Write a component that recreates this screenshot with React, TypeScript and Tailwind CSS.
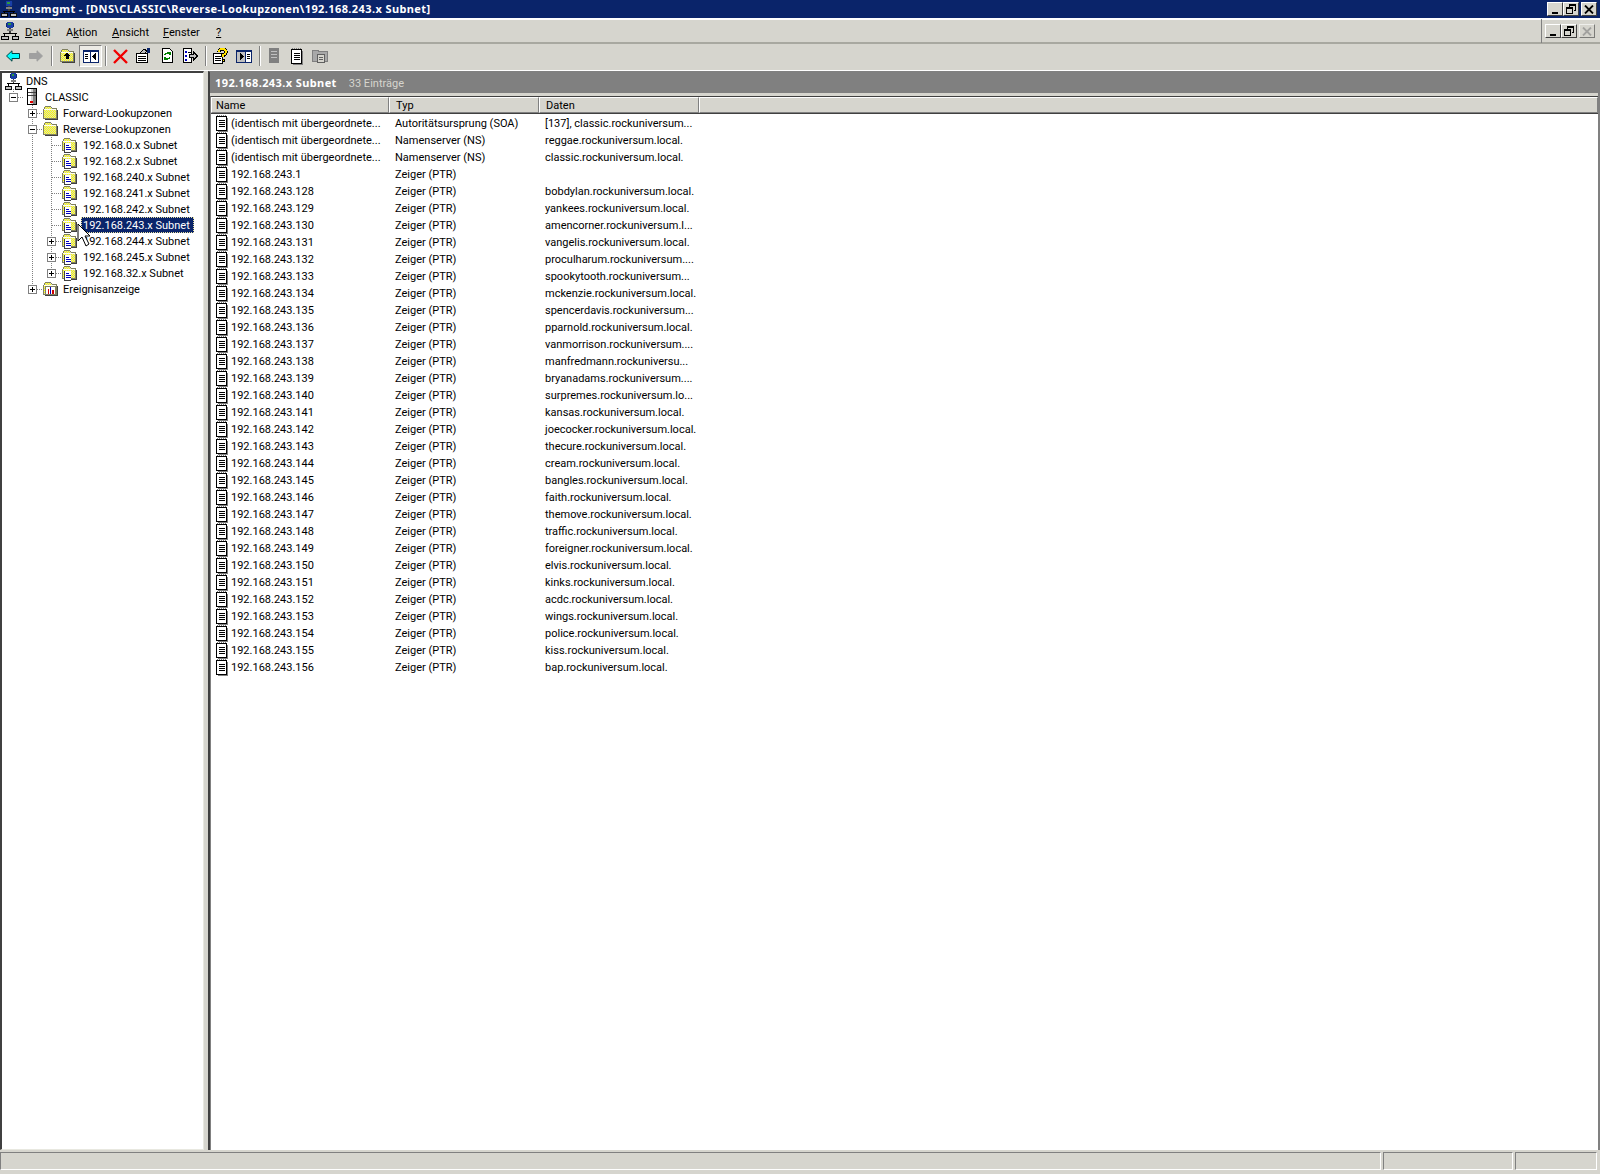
import type { ReactNode } from "react";

const domain = "rockuniversum.local.";

const records: [string, string, string][] = [
  ["(identisch mit übergeordnete...", "Autoritätsursprung (SOA)", "[137], classic.rockuniversum..."],
  ["(identisch mit übergeordnete...", "Namenserver (NS)", `reggae.${domain}`],
  ["(identisch mit übergeordnete...", "Namenserver (NS)", `classic.${domain}`],
  ["192.168.243.1", "Zeiger (PTR)", ""],
  ...[
    `bobdylan.${domain}`,
    `yankees.${domain}`,
    "amencorner.rockuniversum.l...",
    `vangelis.${domain}`,
    "proculharum.rockuniversum....",
    "spookytooth.rockuniversum...",
    `mckenzie.${domain}`,
    "spencerdavis.rockuniversum...",
    `pparnold.${domain}`,
    "vanmorrison.rockuniversum....",
    "manfredmann.rockuniversu...",
    "bryanadams.rockuniversum....",
    "surpremes.rockuniversum.lo...",
    `kansas.${domain}`,
    `joecocker.${domain}`,
    `thecure.${domain}`,
    `cream.${domain}`,
    `bangles.${domain}`,
    `faith.${domain}`,
    `themove.${domain}`,
    `traffic.${domain}`,
    `foreigner.${domain}`,
    `elvis.${domain}`,
    `kinks.${domain}`,
    `acdc.${domain}`,
    `wings.${domain}`,
    `police.${domain}`,
    `kiss.${domain}`,
    `bap.${domain}`,
  ].map((host, i): [string, string, string] => [`192.168.243.${128 + i}`, "Zeiger (PTR)", host]),
];

function Px({ w = 16, h = 16, children }: { w?: number; h?: number; children: ReactNode }) {
  return (
    <svg width={w} height={h} viewBox={`0 0 ${w} ${h}`} shapeRendering="crispEdges" className="shrink-0">
      {children}
    </svg>
  );
}

function Dither({ id, a = "#ffff00", b = "#d8d8c0" }: { id: string; a?: string; b?: string }) {
  return (
    <defs>
      <pattern id={id} width="2" height="2" patternUnits="userSpaceOnUse">
        <rect width="2" height="2" fill={a} />
        <rect width="1" height="1" fill={b} />
        <rect x="1" y="1" width="1" height="1" fill={b} />
      </pattern>
    </defs>
  );
}

function NetIcon({ size = 18 }: { size?: number }) {
  return (
    <svg width={size} height={size} viewBox="0 0 18 18" shapeRendering="crispEdges" className="shrink-0">
      <rect x="6" y="0" width="6" height="6" fill="#1a3fa8" />
      <rect x="7" y="1" width="3" height="2" fill="#2e9b3e" />
      <rect x="5" y="1" width="1" height="4" fill="#0a2a70" />
      <rect x="12" y="1" width="1" height="4" fill="#0a2a70" />
      <rect x="8" y="6" width="2" height="5" fill="#404040" />
      <rect x="6" y="7" width="6" height="2" fill="#808080" />
      <rect x="2" y="11" width="14" height="1" fill="#000" />
      <rect x="3" y="12" width="1" height="2" fill="#000" />
      <rect x="14" y="12" width="1" height="2" fill="#000" />
      <rect x="0" y="14" width="7" height="3" fill="#c0c0c0" stroke="#000" strokeWidth="1" />
      <rect x="11" y="14" width="6.5" height="3" fill="#c0c0c0" stroke="#000" strokeWidth="1" />
    </svg>
  );
}

function ServerIcon() {
  return (
    <Px w={16} h={18}>
      <rect x="4.5" y="0.5" width="9" height="16" fill="#d0d0d0" stroke="#000" />
      <rect x="5" y="1" width="3" height="15" fill="#fff" />
      <rect x="10" y="1" width="3" height="15" fill="#808080" />
      <rect x="5" y="4" width="8" height="1" fill="#404040" />
      <rect x="5" y="7" width="8" height="1" fill="#404040" />
      <rect x="7" y="13" width="3" height="2" fill="#e00000" />
    </Px>
  );
}

function Folder({ id }: { id: string }) {
  return (
    <>
      <Dither id={id} />
      <path d="M1.5 4.5 L3.5 1.5 H8.5 L10.5 3.5 H14.5 V13.5 H1.5 Z" fill={`url(#${id})`} stroke="#808060" />
      <rect x="2" y="4" width="12" height="1" fill="#fffff0" />
      <rect x="15" y="5" width="1" height="10" fill="#404040" />
      <rect x="3" y="14" width="13" height="1" fill="#404040" />
    </>
  );
}

function FolderIcon({ id }: { id: string }) {
  return (
    <div className="-mr-[1px] flex">
      <Px>
        <Folder id={id} />
      </Px>
    </div>
  );
}

function ZoneIcon({ id }: { id: string }) {
  return (
    <Px>
      <Folder id={id} />
      <rect x="3" y="6" width="7" height="10" fill="#fff" />
      <rect x="3" y="6" width="1" height="10" fill="#404040" />
      <rect x="3" y="15" width="7" height="1" fill="#404040" />
      <rect x="5" y="8" width="3" height="1" fill="#0000c0" />
      <rect x="5" y="10" width="5" height="1" fill="#0000c0" />
      <rect x="5" y="12" width="5" height="1" fill="#0000c0" />
    </Px>
  );
}

function EventIcon({ id }: { id: string }) {
  return (
    <div className="-mr-[1px] flex">
      <Px>
        <Folder id={id} />
        <rect x="3.5" y="5.5" width="10" height="8" fill="#fff" stroke="#808060" />
        <rect x="6" y="8" width="1" height="5" fill="#d00000" />
        <rect x="8" y="6" width="1" height="7" fill="#0000c0" />
        <rect x="10" y="9" width="2" height="4" fill="#d00000" />
      </Px>
    </div>
  );
}

function NoteIcon({ gray = false }: { gray?: boolean }) {
  const ink = gray ? "#808080" : "#000";
  return (
    <Px w={13} h={17}>
      <rect x="0.5" y="1.5" width="10" height="14" fill="#fff" stroke={ink} />
      <rect x="1" y="0" width="1" height="1" fill="#808080" />
      <rect x="3" y="0" width="1" height="1" fill="#808080" />
      <rect x="5" y="0" width="1" height="1" fill="#808080" />
      <rect x="7" y="0" width="1" height="1" fill="#808080" />
      <rect x="9" y="0" width="1" height="1" fill="#808080" />
      <rect x="11" y="3" width="1" height="13" fill="#808080" />
      <rect x="2" y="16" width="10" height="1" fill="#808080" />
      <rect x="3" y="5" width="6" height="1" fill={ink} />
      <rect x="3" y="7" width="6" height="1" fill={ink} />
      <rect x="3" y="9" width="6" height="1" fill={ink} />
      <rect x="3" y="11" width="6" height="1" fill={ink} />
    </Px>
  );
}

function TreeCell({ kind, box }: { kind?: "pipe" | "tee" | "ell" | "stub"; box?: "plus" | "minus" }) {
  return (
    <svg width="19" height="16" viewBox="0 0 19 16" shapeRendering="crispEdges" className="shrink-0">
      {(kind === "pipe" || kind === "tee") && (
        <line x1="9.5" y1="0" x2="9.5" y2="16" stroke="#808080" strokeDasharray="1 1" />
      )}
      {kind === "ell" && <line x1="9.5" y1="0" x2="9.5" y2="8" stroke="#808080" strokeDasharray="1 1" />}
      {kind === "stub" && <line x1="9.5" y1="0" x2="9.5" y2="4" stroke="#808080" strokeDasharray="1 1" />}
      {kind && kind !== "pipe" && (
        <line x1="10" y1="8.5" x2="19" y2="8.5" stroke="#808080" strokeDasharray="1 1" />
      )}
      {box && (
        <>
          <rect x="5.5" y="4.5" width="8" height="8" fill="#fff" stroke="#808080" />
          <rect x="7" y="8" width="5" height="1" fill="#000" />
          {box === "plus" && <rect x="9" y="6" width="1" height="5" fill="#000" />}
        </>
      )}
    </svg>
  );
}

const subnets = ["0", "2", "240", "241", "242", "243", "244", "245", "32"];

function TreeRow({ children, icon, label, selected }: { children?: ReactNode; icon: ReactNode; label: string; selected?: boolean }) {
  return (
    <div className="flex h-4 items-center">
      {children}
      {icon}
      {selected ? (
        <span className="ml-[4px] h-4 border border-dotted border-[#e8e0a0] bg-[#0a246a] pl-[1px] pr-[3px] leading-[15px] text-white whitespace-nowrap">
          {label}
        </span>
      ) : (
        <span className="ml-[6px] pt-[2px] whitespace-nowrap">{label}</span>
      )}
    </div>
  );
}

function Tree() {
  return (
    <div className="relative flex flex-col pl-[3px]">
      <div className="flex h-4 items-center">
        <NetIcon size={17} />
        <span className="ml-[4px] pt-[2px]">DNS</span>
      </div>
      <div className="-ml-[1px] flex flex-col">
        <TreeRow icon={<ServerIcon />} label="CLASSIC">
          <TreeCell kind="stub" box="minus" />
        </TreeRow>
        <TreeRow icon={<FolderIcon id="f1" />} label="Forward-Lookupzonen">
          <div className="w-[19px] shrink-0" />
          <TreeCell kind="tee" box="plus" />
        </TreeRow>
        <TreeRow icon={<FolderIcon id="f2" />} label="Reverse-Lookupzonen">
          <div className="w-[19px] shrink-0" />
          <TreeCell kind="tee" box="minus" />
        </TreeRow>
        {subnets.map((s, i) => (
          <TreeRow key={s} icon={<ZoneIcon id={`z${s}`} />} label={`192.168.${s}.x Subnet`} selected={s === "243"}>
            <div className="w-[19px] shrink-0" />
            <TreeCell kind="pipe" />
            <TreeCell kind={i === subnets.length - 1 ? "ell" : "tee"} box={i > 5 ? "plus" : undefined} />
          </TreeRow>
        ))}
        <TreeRow icon={<EventIcon id="f3" />} label="Ereignisanzeige">
          <div className="w-[19px] shrink-0" />
          <TreeCell kind="ell" box="plus" />
        </TreeRow>
      </div>

      {/* mouse pointer sits over the tree */}
      <svg width="14" height="24" viewBox="0 0 14 24" className="absolute left-[75px] top-[150px]">
        <path d="M1 1 V18 L5 14 L9 23 L12 21 L8 13 H13 Z" fill="#fff" stroke="#000" strokeWidth="1" />
      </svg>
    </div>
  );
}

function WinBtn({ children, off }: { children: ReactNode; off?: boolean }) {
  return (
    <div
      className={`flex h-[14px] w-[16px] items-center justify-center border border-t-white border-l-white border-r-[#404040] border-b-[#404040] bg-[#d6d5ce] ${off ? "opacity-60" : ""}`}
    >
      {children}
    </div>
  );
}

const MinGlyph = () => <div className="mt-[7px] mr-[1px] h-[2px] w-[6px] bg-black" />;
const RestoreGlyph = () => (
  <svg width="10" height="10" viewBox="0 0 10 10" shapeRendering="crispEdges">
    <path d="M3 2.5 V0.5 H9.5 V6.5 H7.5" fill="none" stroke="#000" />
    <rect x="3" y="0" width="7" height="2" fill="#000" />
    <rect x="0.5" y="3.5" width="6" height="6" fill="none" stroke="#000" />
    <rect x="0" y="3" width="7" height="2" fill="#000" />
  </svg>
);
const CloseGlyph = ({ color = "#000" }: { color?: string }) => (
  <svg width="10" height="9" viewBox="0 0 10 9">
    <path d="M1 0.5 L9 8.5 M9 0.5 L1 8.5" stroke={color} strokeWidth="1.8" fill="none" />
  </svg>
);

function ToolBtn({ w, children, pressed }: { w: number; children: ReactNode; pressed?: boolean }) {
  return (
    <div
      style={{ width: w }}
      className={`flex h-[22px] shrink-0 items-center justify-center ${pressed ? "border border-t-[#808080] border-l-[#808080] border-r-white border-b-white bg-[#ecebe6]" : ""}`}
    >
      {children}
    </div>
  );
}

const ToolSep = ({ className = "ml-[7px] mr-[5px]" }: { className?: string }) => (
  <div className={`h-[20px] w-[2px] shrink-0 border-l border-r border-l-[#808080] border-r-white ${className}`} />
);

function Arrow({ flip, fill, edge }: { flip?: boolean; fill: string; edge: string }) {
  return (
    <svg width="14" height="12" viewBox="0 0 14 12" style={flip ? { transform: "scaleX(-1)" } : undefined}>
      <path d="M0.5 6 L6 0.8 V3.5 H13.5 V8.5 H6 V11.2 Z" fill={fill} stroke={edge} strokeWidth="1" />
    </svg>
  );
}

function Toolbar() {
  return (
    <div className="flex h-[26px] shrink-0 items-center pl-[5px] pb-[2px]">
      <ToolBtn w={16}>
        <Arrow fill="#00ffff" edge="#004040" />
      </ToolBtn>
      <div className="w-[7px]" />
      <ToolBtn w={16}>
        <Arrow flip fill="#a0a0a0" edge="#a0a0a0" />
      </ToolBtn>
      <ToolSep className="ml-[7px] mr-[3px]" />
      <ToolBtn w={22}>
        <Px>
          <Folder id="tb1" />
          <path d="M8 4.5 L11 8 H9.5 V11 H6.5 V8 H5 Z" fill="#000" />
        </Px>
      </ToolBtn>
      <div className="w-[1px]" />
      <ToolBtn w={23} pressed>
        <Px w={16} h={13}>
          <rect x="0.5" y="0.5" width="15" height="12" fill="#fff" stroke="#0a246a" />
          <rect x="0" y="0" width="16" height="2" fill="#0a246a" />
          <rect x="7" y="1" width="1" height="11" fill="#0a246a" />
          <rect x="2" y="4" width="3" height="1" fill="#000" />
          <rect x="2" y="6" width="3" height="1" fill="#000" />
          <rect x="2" y="8" width="3" height="1" fill="#000" />
          <path d="M13 3 V10 L9 6.5 Z" fill="#000" />
        </Px>
      </ToolBtn>
      <ToolSep className="ml-[3px] mr-[5px]" />
      <ToolBtn w={16}>
        <svg width="15" height="15" viewBox="0 0 15 15">
          <path d="M1 1 L14 14 M14 1 L1 14" stroke="#f00000" strokeWidth="2.4" fill="none" />
        </svg>
      </ToolBtn>
      <div className="w-[7px]" />
      <ToolBtn w={16}>
        <Px>
          <rect x="1.5" y="5.5" width="11" height="9" fill="#fff" stroke="#000" />
          <rect x="3" y="8" width="8" height="1" fill="#000" />
          <rect x="3" y="10" width="8" height="1" fill="#000" />
          <rect x="3" y="12" width="8" height="1" fill="#000" />
          <path d="M5 5 L9 1 L12 3 L9 6 Z" fill="#c0c0c0" stroke="#000" />
          <rect x="12" y="0" width="3" height="5" fill="#0a246a" />
        </Px>
      </ToolBtn>
      <div className="w-[8px]" />
      <ToolBtn w={16}>
        <Px w={13}>
          <path d="M1.5 0.5 H8.5 L11.5 3.5 V14.5 H1.5 Z" fill="#fff" stroke="#000" />
          <path d="M4 7 A3 3 0 0 1 9 6 M9 9 A3 3 0 0 1 4 10" stroke="#008000" strokeWidth="1.4" fill="none" />
          <rect x="8" y="4" width="2" height="3" fill="#008000" />
          <rect x="3" y="9" width="2" height="3" fill="#008000" />
        </Px>
      </ToolBtn>
      <div className="w-[7px]" />
      <ToolBtn w={16}>
        <Px>
          <path d="M1.5 0.5 H9.5 V14.5 H1.5 Z" fill="#fff" stroke="#000" />
          <rect x="3" y="3" width="2" height="2" fill="#0000c0" />
          <rect x="3" y="7" width="2" height="2" fill="#0000c0" />
          <rect x="3" y="11" width="2" height="2" fill="#0000c0" />
          <rect x="6" y="4" width="3" height="1" fill="#000" />
          <path d="M7.5 6.5 H11.5 V4 L15.5 8 L11.5 12 V9.5 H7.5 Z" fill="#c0c0c0" stroke="#000" />
        </Px>
      </ToolBtn>
      <ToolSep />
      <ToolBtn w={16}>
        <Px>
          <rect x="1.5" y="5.5" width="9" height="9.5" fill="#fff" stroke="#000" />
          <rect x="3" y="8" width="6" height="1" fill="#000" />
          <rect x="3" y="10" width="6" height="1" fill="#000" />
          <rect x="3" y="12" width="6" height="1" fill="#000" />
          <path d="M7 4 Q7 1 10.5 1 Q14 1 14 4 Q14 6 11 7 V9" stroke="#000" strokeWidth="3.4" fill="none" />
          <path d="M7 4 Q7 1 10.5 1 Q14 1 14 4 Q14 6 11 7 V9" stroke="#ffe000" strokeWidth="1.8" fill="none" />
          <rect x="10" y="11" width="2.5" height="2.5" fill="#ffe000" stroke="#000" />
        </Px>
      </ToolBtn>
      <div className="w-[8px]" />
      <ToolBtn w={16}>
        <Px w={16} h={13}>
          <rect x="0.5" y="0.5" width="15" height="12" fill="#c0c0c0" stroke="#0a246a" />
          <rect x="0" y="0" width="16" height="2" fill="#0a246a" />
          <rect x="9" y="1" width="1" height="11" fill="#0a246a" />
          <rect x="10" y="2" width="5" height="10" fill="#fff" />
          <path d="M4 3 V10 L8 6.5 Z" fill="#000" />
          <rect x="11" y="4" width="3" height="1" fill="#000" />
          <rect x="11" y="6" width="3" height="1" fill="#000" />
          <rect x="11" y="8" width="3" height="1" fill="#000" />
        </Px>
      </ToolBtn>
      <ToolSep />
      <ToolBtn w={16}>
        <Px w={12}>
          <rect x="1" y="0" width="10" height="15" fill="#808080" />
          <rect x="3" y="3" width="6" height="1" fill="#c0c0c0" />
          <rect x="3" y="6" width="6" height="1" fill="#c0c0c0" />
          <rect x="3" y="9" width="6" height="1" fill="#c0c0c0" />
        </Px>
      </ToolBtn>
      <div className="w-[7px]" />
      <ToolBtn w={16}>
        <NoteIcon />
      </ToolBtn>
      <div className="w-[7px]" />
      <ToolBtn w={16}>
        <Px>
          <path d="M0.5 2.5 H6 L7 3.5 H15.5 V13.5 H0.5 Z" fill="#a8a8a8" stroke="#808080" />
          <rect x="5.5" y="6.5" width="7" height="8" fill="#d6d5ce" stroke="#606060" />
          <rect x="7" y="9" width="4" height="1" fill="#606060" />
          <rect x="7" y="11" width="4" height="1" fill="#606060" />
        </Px>
      </ToolBtn>
    </div>
  );
}

function HeaderCell({ w, label, className = "pl-[6px]" }: { w?: number; label?: string; className?: string }) {
  return (
    <div
      style={w ? { width: w } : undefined}
      className={`h-[16px] border-t border-l border-r border-b border-t-white border-l-white border-r-[#808080] border-b-[#808080] leading-[16px] ${className} ${w ? "shrink-0" : "flex-1"}`}
    >
      {label}
    </div>
  );
}

export default function App() {
  return (
    <div
      className="flex h-[1174px] w-[1600px] flex-col overflow-hidden bg-[#d6d5ce] text-[11px] text-black"
      style={{ fontFamily: "Roboto, 'Liberation Sans', sans-serif" }}
    >
      {/* title bar */}
      <div className="flex h-[18px] shrink-0 items-center bg-[#0a246a] pl-[1px] pr-[3px]">
        <NetIcon size={16} />
        <span className="ml-[3px] flex-1 font-['Noto_Sans'] font-bold leading-[18px] tracking-[0.4px] text-white">
          dnsmgmt - [DNS\CLASSIC\Reverse-Lookupzonen\192.168.243.x Subnet]
        </span>
        <WinBtn>
          <MinGlyph />
        </WinBtn>
        <WinBtn>
          <RestoreGlyph />
        </WinBtn>
        <div className="w-[2px]" />
        <WinBtn>
          <CloseGlyph />
        </WinBtn>
      </div>

      {/* menu bar */}
      <div className="flex h-[26px] shrink-0 items-center border-t-2 border-b-2 border-t-white border-b-[#a8a8a0] pl-[1px] pr-[3px]">
        <NetIcon size={18} />
        <div className="ml-[6px] mt-[4px] flex flex-1 items-center">
          <span className="w-[41px]"><u>D</u>atei</span>
          <span className="w-[46px]">A<u>k</u>tion</span>
          <span className="w-[51px]"><u>A</u>nsicht</span>
          <span className="w-[53px]"><u>F</u>enster</span>
          <u>?</u>
        </div>
        <div className="mr-[2px] flex h-[24px] items-center border-l border-l-[#808080] pl-[3px]">
          <WinBtn>
            <MinGlyph />
          </WinBtn>
          <WinBtn>
            <RestoreGlyph />
          </WinBtn>
          <div className="w-[2px]" />
          <WinBtn off>
            <CloseGlyph color="#808080" />
          </WinBtn>
        </div>
      </div>

      <Toolbar />

      {/* panes */}
      <div className="flex h-[1080px] shrink-0 border-t border-t-white">
        <div className="h-full w-[204px] shrink-0 border-t-2 border-l-2 border-r border-b border-t-[#404040] border-l-[#404040] border-r-[#e8e8e0] border-b-[#e8e8e0] bg-white">
          <Tree />
        </div>
        <div className="w-[4px] shrink-0" />
        <div className="flex h-full flex-1 flex-col border-l-2 border-l-[#404040] border-t border-t-[#808080] border-r-2 border-r-[#808080] bg-white">
          <div className="flex h-[21px] shrink-0 items-center bg-[#808080] pl-[5px]">
            <span className="pt-[2px] font-['Noto_Sans'] font-bold tracking-[0.4px] text-white">192.168.243.x Subnet</span>
            <span className="ml-[12px] pt-[4px] text-[#d6d5ce]">33 Einträge</span>
          </div>
          <div className="h-[3px] shrink-0 bg-[#d6d5ce]" />
          <div className="flex flex-1 flex-col border-t border-l border-t-[#404040] border-l-[#808080]">
            <div className="flex shrink-0 bg-[#d6d5ce]">
              <HeaderCell w={178} label="Name" className="pl-[4px]" />
              <HeaderCell w={150} label="Typ" />
              <HeaderCell w={160} label="Daten" />
              <HeaderCell />
            </div>
            <div className="h-[1px] shrink-0 bg-[#404040]" />
            <div className="flex flex-col pt-[1px]">
              {records.map(([name, type, data], i) => (
                <div key={i} className="flex h-[17px] items-center whitespace-nowrap">
                  <div className="flex w-[178px] shrink-0 items-center pl-[5px]">
                    <NoteIcon />
                    <span className="ml-[2px] pt-[2px]">{name}</span>
                  </div>
                  <div className="w-[150px] shrink-0 pl-[6px] pt-[2px]">{type}</div>
                  <div className="w-[160px] shrink-0 pl-[6px] pt-[2px]">{data}</div>
                </div>
              ))}
            </div>
          </div>
        </div>
      </div>

      {/* status bar */}
      <div className="flex h-[24px] shrink-0 gap-[2px] pt-[2px] pr-[3px] pb-[4px]">
        <div className="flex-1 border-t border-l border-r border-b border-t-[#808080] border-l-[#808080] border-r-white border-b-white" />
        <div className="w-[130px] border-t border-l border-r border-b border-t-[#808080] border-l-[#808080] border-r-white border-b-white" />
        <div className="w-[82px] border-t border-l border-r border-b border-t-[#808080] border-l-[#808080] border-r-white border-b-white" />
      </div>
    </div>
  );
}
